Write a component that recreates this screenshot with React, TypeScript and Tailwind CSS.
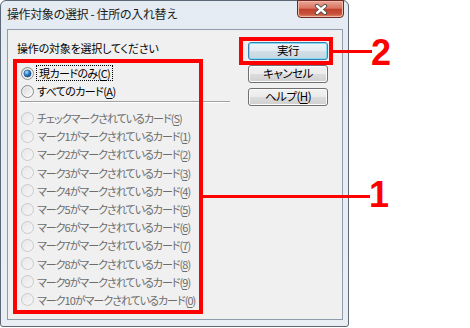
import React from 'react';

const jp = "font-['Noto_Sans_CJK_JP',sans-serif] [font-feature-settings:'palt']";

const items: [string, string][] = [
  ['チェックマークされているカード', 'S'],
  ['マーク1がマークされているカード', '1'],
  ['マーク2がマークされているカード', '2'],
  ['マーク3がマークされているカード', '3'],
  ['マーク4がマークされているカード', '4'],
  ['マーク5がマークされているカード', '5'],
  ['マーク6がマークされているカード', '6'],
  ['マーク7がマークされているカード', '7'],
  ['マーク8がマークされているカード', '8'],
  ['マーク9がマークされているカード', '9'],
  ['マーク10がマークされているカード', '0'],
];

const Radio: React.FC<{ checked?: boolean; disabled?: boolean }> = ({ checked, disabled }) => (
  <svg width="13" height="13" viewBox="0 0 13 13" className="shrink-0">
    <defs>
      <linearGradient id="rOn" x1="0" y1="0" x2="1" y2="1">
        <stop offset="0" stopColor="#d4d4d4" />
        <stop offset="1" stopColor="#ffffff" />
      </linearGradient>
      <linearGradient id="rOff" x1="0" y1="0" x2="1" y2="1">
        <stop offset="0" stopColor="#e6e6e6" />
        <stop offset="1" stopColor="#f7f7f7" />
      </linearGradient>
      <radialGradient id="rDot" cx="0.35" cy="0.3" r="0.75">
        <stop offset="0" stopColor="#b9e2fb" />
        <stop offset="0.45" stopColor="#3d8fd6" />
        <stop offset="1" stopColor="#0d3f7c" />
      </radialGradient>
    </defs>
    <circle
      cx="6.5"
      cy="6.5"
      r="6"
      fill={disabled ? 'url(#rOff)' : 'url(#rOn)'}
      stroke={disabled ? '#c9c9c9' : '#8c8c8c'}
    />
    {!disabled && <circle cx="6.5" cy="6.5" r="4.5" fill="none" stroke="#f4f4f4" strokeWidth="0.8" />}
    {checked && <circle cx="6.5" cy="6.5" r="3.6" fill="url(#rDot)" stroke="#1d4f86" strokeWidth="0.6" />}
  </svg>
);

const Label: React.FC<{ text: string; hot: string }> = ({ text, hot }) => (
  <>
    {text}(<span className="underline decoration-1 underline-offset-[2px]">{hot}</span>)
  </>
);

const Button: React.FC<{ children: React.ReactNode; primary?: boolean }> = ({ children, primary }) => (
  <div
    className={
      primary
        ? 'h-[18px] w-[80px] rounded-[3px] border border-[#3c7fb1] bg-[linear-gradient(#eef5f9,#e2ecf2_50%,#d2e0e8_50%,#c6d6df)] shadow-[inset_0_0_0_1px_#7fdcf7] flex items-center justify-center text-black text-[11.5px] tracking-[-0.5px]'
        : 'h-[18px] w-[80px] rounded-[3px] border border-[#707070] bg-[linear-gradient(#f2f2f2,#ebebeb_50%,#dddddd_50%,#cfcfcf)] shadow-[inset_0_0_0_1px_#fbfbfb] flex items-center justify-center text-black text-[11.5px] tracking-[-0.5px]'
    }
  >
    {children}
  </div>
);

const App: React.FC = () => {
  return (
    <div className="relative w-[470px] h-[328px] bg-white overflow-hidden">
      {/* Window */}
      <div className="w-[349px] h-[327px] rounded-t-[6px] rounded-b-[3px] border border-[#5c6875] bg-[linear-gradient(#e4ebf2,#e9eef4)] flex flex-col">
        {/* Title bar */}
        <div className="h-[28px] flex items-start shrink-0">
          <span className="font-['Noto_Sans_CJK_JP',sans-serif] text-[12px] tracking-[-0.4px] ml-[6px] mt-[4px] leading-[18px] text-[#1b1b1b]">
            操作対象の選択 - 住所の入れ替え
          </span>
          <div className="ml-auto mr-[4px] -mt-[1px] w-[47px] h-[18px] rounded-b-[4px] border border-[#6e2a22] bg-[linear-gradient(#eaa697,#d87562_45%,#c2402c_52%,#c8513a_80%,#dd8b68)] shadow-[inset_0_0_0_1px_#f0b8a8] flex items-center justify-center">
            <svg width="14" height="11" viewBox="0 0 14 11">
              <path d="M3 2L11 9M11 2L3 9" stroke="#4a4a4a" strokeWidth="4.2" strokeLinecap="round" />
              <path d="M3 2L11 9M11 2L3 9" stroke="#ffffff" strokeWidth="2.4" strokeLinecap="round" />
            </svg>
          </div>
        </div>

        {/* Client area */}
        <div className={`${jp} ml-[6px] mr-[5px] mb-[6px] flex-1 border border-[#8f9cab] bg-[#f0f0f0] flex`}>
          <div className="w-[224px] pl-[9px] pt-[10px] flex flex-col text-[11px] tracking-[-1px]">
            <div className="h-[16px] leading-[16px] text-black tracking-[-0.2px]">操作の対象を選択してください</div>
            <div className="mt-[8px] h-[18px] pl-[4px] flex items-center gap-[2px] text-black">
              <Radio checked />
              <span className="leading-[14px] border border-dotted border-black px-[2px] tracking-[-0.6px]">
                <Label text="現カードのみ" hot="C" />
              </span>
            </div>
            <div className="h-[18px] pl-[4px] flex items-center gap-[3px] text-black">
              <Radio />
              <span className="leading-[14px] tracking-[-0.6px]">
                <Label text="すべてのカード" hot="A" />
              </span>
            </div>
            <div className="mt-[1px] ml-[3px] w-[210px] h-[2px] border-t border-[#a0a0a0] border-b border-b-white" />
            <div className="mt-[6px] flex flex-col">
              {items.map(([text, hot]) => (
                <div key={hot} className="h-[18.2px] pl-[4px] flex items-center gap-[3px] text-[#6d6d6d]">
                  <Radio disabled />
                  <span className="leading-[14px]">
                    <Label text={text} hot={hot} />
                  </span>
                </div>
              ))}
            </div>
          </div>
          <div className="ml-auto mr-[14px] pt-[12px] flex flex-col gap-[5px]">
            <Button primary>実行</Button>
            <Button>キャンセル</Button>
            <Button>
              <Label text="ヘルプ" hot="H" />
            </Button>
          </div>
        </div>
      </div>

      {/* Annotations */}
      <div className="absolute left-[13px] top-[59px] w-[190px] h-[255px] border-4 border-[#ff0000]" />
      <div className="absolute left-[203px] top-[195px] w-[167px] h-[3px] bg-[#ff0000]" />
      <div className="absolute left-[369px] top-[177px] text-[36px] leading-none font-bold text-[#ff0000] font-['Liberation_Sans',Arial,sans-serif]">
        1
      </div>
      <div className="absolute left-[239px] top-[37px] w-[94px] h-[28px] border-4 border-[#ff0000]" />
      <div className="absolute left-[333px] top-[50px] w-[39px] h-[3px] bg-[#ff0000]" />
      <div className="absolute left-[371px] top-[35px] text-[36px] leading-none font-bold text-[#ff0000] font-['Liberation_Sans',Arial,sans-serif]">
        2
      </div>
    </div>
  );
};

export default App;
